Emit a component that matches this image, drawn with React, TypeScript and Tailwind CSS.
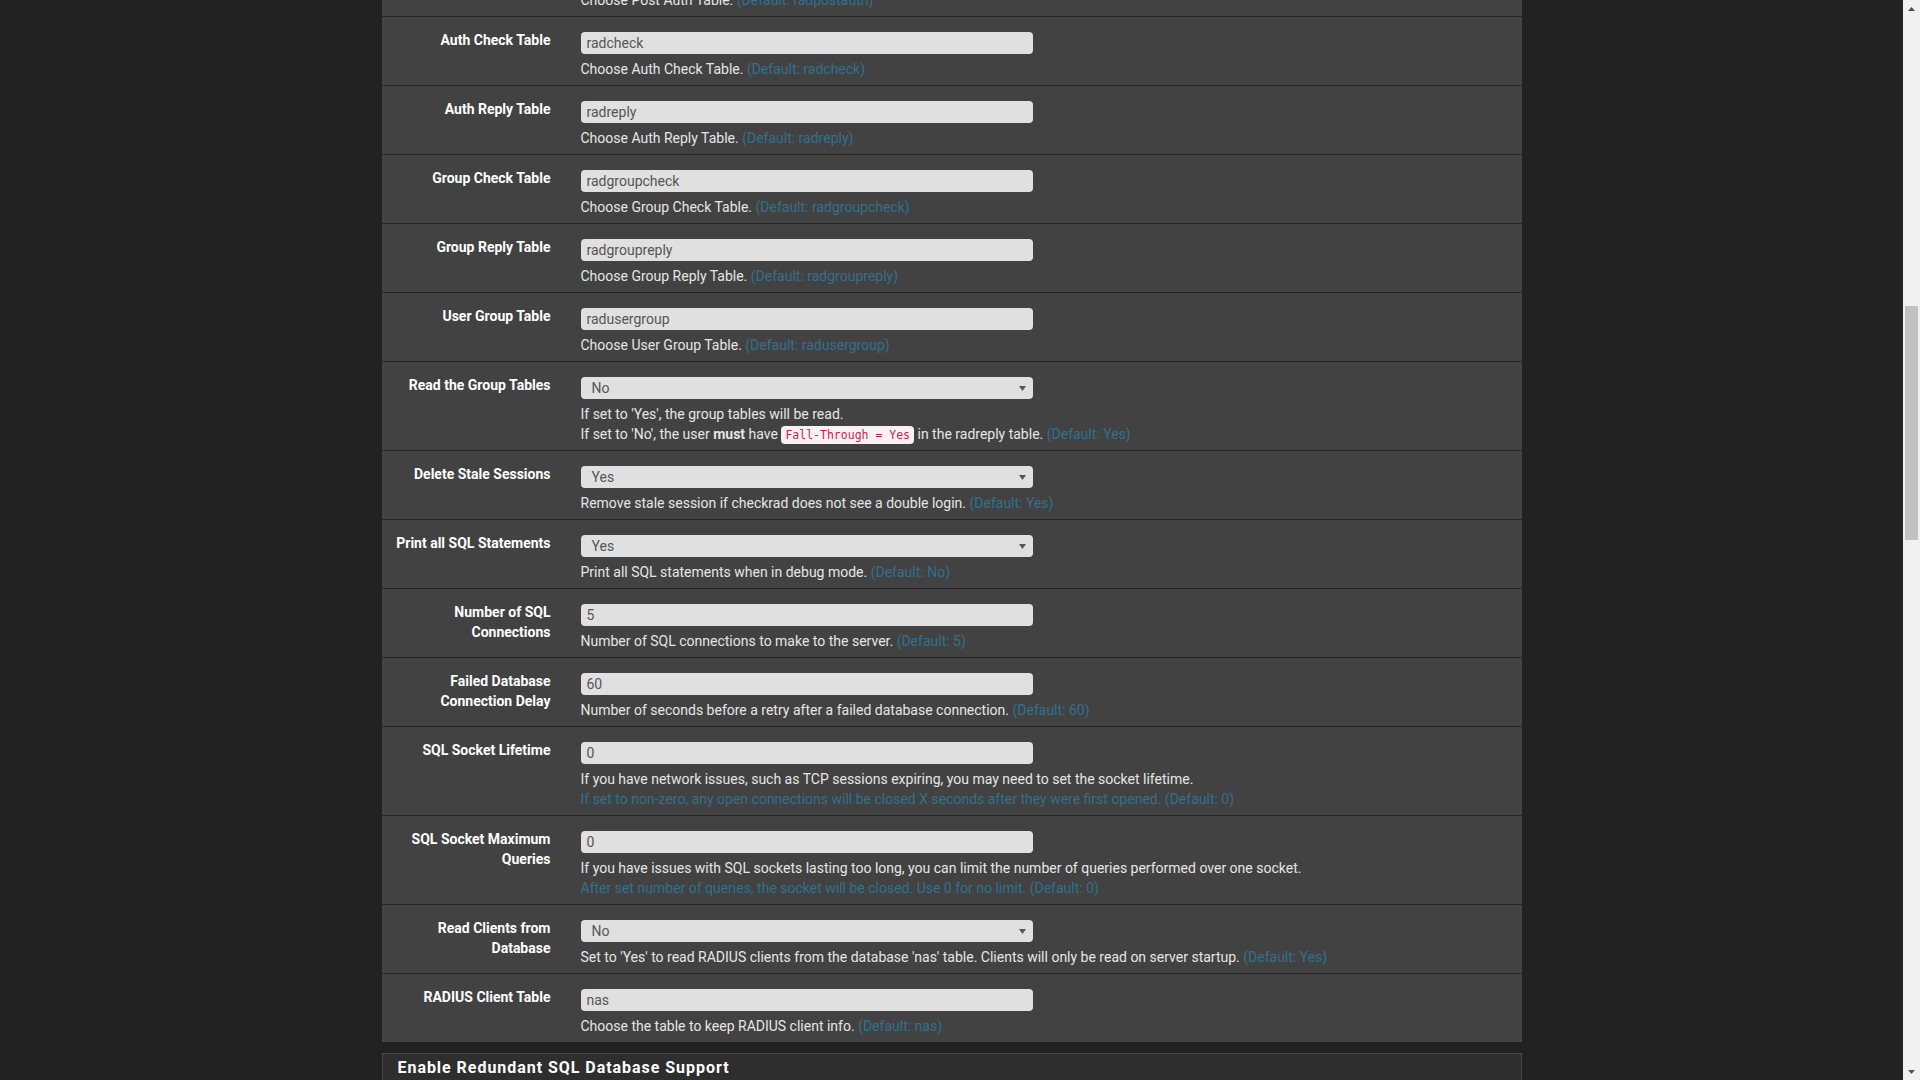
import type { ReactNode } from 'react'

type Row = {
  label: ReactNode
  kind: 'input' | 'select'
  value: string
  help: ReactNode
  note?: ReactNode
}

const Def = ({ children }: { children: ReactNode }) => (
  <span className="text-[#31708f]">{children}</span>
)

const rows: Row[] = [
  {
    label: 'Post Auth Table',
    kind: 'input',
    value: 'radpostauth',
    help: (
      <>
        Choose Post Auth Table. <Def>(Default: radpostauth)</Def>
      </>
    ),
  },
  {
    label: 'Auth Check Table',
    kind: 'input',
    value: 'radcheck',
    help: (
      <>
        Choose Auth Check Table. <Def>(Default: radcheck)</Def>
      </>
    ),
  },
  {
    label: 'Auth Reply Table',
    kind: 'input',
    value: 'radreply',
    help: (
      <>
        Choose Auth Reply Table. <Def>(Default: radreply)</Def>
      </>
    ),
  },
  {
    label: 'Group Check Table',
    kind: 'input',
    value: 'radgroupcheck',
    help: (
      <>
        Choose Group Check Table. <Def>(Default: radgroupcheck)</Def>
      </>
    ),
  },
  {
    label: 'Group Reply Table',
    kind: 'input',
    value: 'radgroupreply',
    help: (
      <>
        Choose Group Reply Table. <Def>(Default: radgroupreply)</Def>
      </>
    ),
  },
  {
    label: 'User Group Table',
    kind: 'input',
    value: 'radusergroup',
    help: (
      <>
        Choose User Group Table. <Def>(Default: radusergroup)</Def>
      </>
    ),
  },
  {
    label: 'Read the Group Tables',
    kind: 'select',
    value: 'No',
    help: "If set to 'Yes', the group tables will be read.",
    note: (
      <>
        If set to 'No', the user <b className="font-bold">must</b> have{' '}
        <code
          className="rounded-[4px] bg-[#f9f2f4] px-[4px] py-[2px] text-[11.5px] leading-[14px] text-[#c7254e]"
          style={{ fontFamily: '"DejaVu Sans Mono", "Liberation Mono", monospace' }}
        >
          Fall-Through = Yes
        </code>{' '}
        in the radreply table. <Def>(Default: Yes)</Def>
      </>
    ),
  },
  {
    label: 'Delete Stale Sessions',
    kind: 'select',
    value: 'Yes',
    help: (
      <>
        Remove stale session if checkrad does not see a double login. <Def>(Default: Yes)</Def>
      </>
    ),
  },
  {
    label: 'Print all SQL Statements',
    kind: 'select',
    value: 'Yes',
    help: (
      <>
        Print all SQL statements when in debug mode. <Def>(Default: No)</Def>
      </>
    ),
  },
  {
    label: (
      <>
        Number of SQL
        <br />
        Connections
      </>
    ),
    kind: 'input',
    value: '5',
    help: (
      <>
        Number of SQL connections to make to the server. <Def>(Default: 5)</Def>
      </>
    ),
  },
  {
    label: (
      <>
        Failed Database
        <br />
        Connection Delay
      </>
    ),
    kind: 'input',
    value: '60',
    help: (
      <>
        Number of seconds before a retry after a failed database connection.{' '}
        <Def>(Default: 60)</Def>
      </>
    ),
  },
  {
    label: 'SQL Socket Lifetime',
    kind: 'input',
    value: '0',
    help: 'If you have network issues, such as TCP sessions expiring, you may need to set the socket lifetime.',
    note: (
      <Def>
        If set to non-zero, any open connections will be closed X seconds after they were first
        opened. (Default: 0)
      </Def>
    ),
  },
  {
    label: (
      <>
        SQL Socket Maximum
        <br />
        Queries
      </>
    ),
    kind: 'input',
    value: '0',
    help: 'If you have issues with SQL sockets lasting too long, you can limit the number of queries performed over one socket.',
    note: (
      <Def>After set number of queries, the socket will be closed. Use 0 for no limit. (Default: 0)</Def>
    ),
  },
  {
    label: (
      <>
        Read Clients from
        <br />
        Database
      </>
    ),
    kind: 'select',
    value: 'No',
    help: (
      <>
        Set to 'Yes' to read RADIUS clients from the database 'nas' table. Clients will only be read
        on server startup. <Def>(Default: Yes)</Def>
      </>
    ),
  },
  {
    label: 'RADIUS Client Table',
    kind: 'input',
    value: 'nas',
    help: (
      <>
        Choose the table to keep RADIUS client info. <Def>(Default: nas)</Def>
      </>
    ),
  },
]

const Field = ({ kind, value }: { kind: Row['kind']; value: string }) => {
  if (kind === 'select') {
    return (
      <div className="flex h-[22px] w-[452px] items-center justify-between rounded-[4px] bg-[#e0e0e0] pl-[11px] pr-[7px] text-[14px] text-[#555]">
        <span>{value}</span>
        <svg width="7" height="5" viewBox="0 0 7 5">
          <path d="M0 0h7L3.5 5z" fill="#555" />
        </svg>
      </div>
    )
  }
  return (
    <div className="flex h-[22px] w-[452px] items-center rounded-[4px] bg-[#e0e0e0] pl-[6px] text-[14px] text-[#555]">
      {value}
    </div>
  )
}

const App = () => {
  return (
    <div
      className="flex h-screen overflow-hidden bg-[#222]"
      style={{ fontFamily: 'Roboto, "Liberation Sans", sans-serif' }}
    >
      <div className="flex-1 overflow-hidden">
        <div className="mx-auto -mt-[52px] w-[1140px]">
          {/* Settings panel */}
          <div className="divide-y divide-[#262626] bg-[#424242]">
            {rows.map((row, i) => (
              <div key={i} className="flex">
                <div className="w-[184px] shrink-0 whitespace-nowrap pr-[15px] pt-[13px] text-right text-[14px] font-bold leading-[20px] text-white">
                  {row.label}
                </div>
                <div className="pb-[6px] pl-[15px] pt-[15px]">
                  <Field kind={row.kind} value={row.value} />
                  <div className="mt-[5px] whitespace-nowrap text-[14px] leading-[20px] text-[#e6e6e6]">
                    <div className="h-[20px]">{row.help}</div>
                    {row.note && <div className="h-[20px]">{row.note}</div>}
                  </div>
                </div>
              </div>
            ))}
          </div>

          {/* Next panel */}
          <div className="mt-[11px] border border-[#474747] bg-[#2e2e2e] px-[15px] pb-[10px] pt-[4px]">
            <h2 className="text-[16px] font-bold leading-[20px] tracking-[0.06em] text-white">
              Enable Redundant SQL Database Support
            </h2>
          </div>
        </div>
      </div>

      {/* Scrollbar */}
      <div className="flex w-[17px] shrink-0 flex-col bg-[#f1f1f1]">
        <div className="flex h-[17px] items-center justify-center">
          <svg width="7" height="4" viewBox="0 0 7 4">
            <path d="M0 4L3.5 0L7 4z" fill="#505050" />
          </svg>
        </div>
        <div className="h-[289px]" />
        <div className="mx-[2px] h-[234px] bg-[#c1c1c1]" />
        <div className="flex-1" />
        <div className="flex h-[17px] items-center justify-center">
          <svg width="7" height="4" viewBox="0 0 7 4">
            <path d="M0 0h7L3.5 4z" fill="#505050" />
          </svg>
        </div>
      </div>
    </div>
  )
}

export default App
